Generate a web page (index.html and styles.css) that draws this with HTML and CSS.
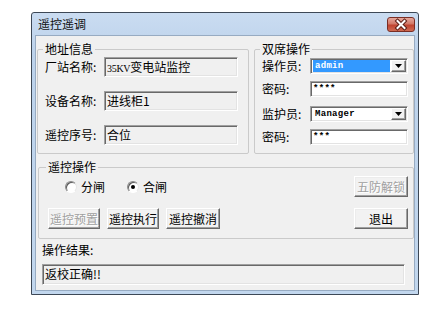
FILE: index.html
```html
<!DOCTYPE html>
<html>
<head>
<meta charset="utf-8">
<link rel="stylesheet" href="styles.css">
</head>
<body>
<div class="window">
  <div class="titlebar">
    <span class="title">遥控遥调</span>
    <div class="close">
      <svg width="26" height="13" viewBox="0 0 26 13">
        <path d="M9.5 3 L16.5 10 M16.5 3 L9.5 10" stroke="#5b1d14" stroke-width="4" stroke-linecap="square"/>
        <path d="M9.5 3 L16.5 10 M16.5 3 L9.5 10" stroke="#ffffff" stroke-width="2" stroke-linecap="square"/>
      </svg>
    </div>
  </div>
  <div class="client">
    <div class="top">
      <fieldset class="group g-addr">
        <legend>地址信息</legend>
        <div class="row"><span class="lbl">厂站名称:</span><div class="field ro sunken"><span class="tiny">35KV</span>变电站监控</div></div>
        <div class="row"><span class="lbl">设备名称:</span><div class="field ro sunken">进线柜1</div></div>
        <div class="row"><span class="lbl">遥控序号:</span><div class="field ro sunken">合位</div></div>
      </fieldset>
      <fieldset class="group g-dual">
        <legend>双席操作</legend>
        <div class="row r1"><span class="lbl">操作员:</span>
          <div class="combo sunken"><span class="sel mono hl">admin</span><span class="drop raised"><svg width="7" height="4" viewBox="0 0 7 4"><path d="M0 0 H7 L3.5 4 Z" fill="#000"/></svg></span></div>
        </div>
        <div class="row r2"><span class="lbl">密码:</span><div class="edit sunken mono">****</div></div>
        <div class="row r3"><span class="lbl">监护员:</span>
          <div class="combo sunken"><span class="sel mono">Manager</span><span class="drop raised"><svg width="7" height="4" viewBox="0 0 7 4"><path d="M0 0 H7 L3.5 4 Z" fill="#000"/></svg></span></div>
        </div>
        <div class="row r4"><span class="lbl">密码:</span><div class="edit sunken mono">***</div></div>
      </fieldset>
    </div>
    <fieldset class="group g-op">
      <legend>遥控操作</legend>
      <div class="oprow">
        <div class="radios">
          <span class="radio"><span class="circ"></span>分闸</span>
          <span class="radio"><span class="circ"><span class="dot"></span></span>合闸</span>
        </div>
        <button class="btn raised dis w54">五防解锁</button>
      </div>
      <div class="oprow row2">
        <div class="btns">
          <button class="btn raised dis">遥控预置</button>
          <button class="btn raised">遥控执行</button>
          <button class="btn raised w54">遥控撤消</button>
        </div>
        <button class="btn raised w54">退出</button>
      </div>
    </fieldset>
    <div class="result-label">操作结果:</div>
    <div class="field ro sunken result">返校正确!!</div>
  </div>
</div>
</body>
</html>
```
FILE: styles.css
```css
html, body {
  margin: 0;
  padding: 0;
  background: #ffffff;
}
body {
  font-family: "Noto Sans CJK SC", "Liberation Sans", sans-serif;
  font-size: 12px;
  color: #000;
}
.window {
  box-sizing: border-box;
  margin: 12px 0 0 31px;
  width: 388px;
  height: 283px;
  border: 1px solid #3d4856;
  border-radius: 3px 3px 0 0;
  padding: 0 3px 3px 3px;
  background: linear-gradient(#cadcf1, #bcd2eb 40px, #c2d7ee);
  display: flex;
  flex-direction: column;
}
.titlebar {
  height: 22px;
  display: flex;
  align-items: flex-start;
  justify-content: space-between;
  padding-left: 3px;
}
.title {
  line-height: 22px;
  font-size: 12px;
  color: #111;
}
.close {
  box-sizing: border-box;
  margin-top: 4px;
  width: 28px;
  height: 15px;
  border: 1px solid #7a2e25;
  border-radius: 3px;
  background: linear-gradient(#e6a89c, #d27867 45%, #c0432f 55%, #cf6a52);
  display: flex;
  align-items: center;
  justify-content: center;
}
.client {
  flex: 1;
  border: 1px solid #97abc2;
  background: #f0f0f0;
  padding: 6px 0 0 0;
}
.top {
  display: flex;
  gap: 5px;
  margin-left: 1px;
}
.group {
  margin: 0;
  min-width: 0;
  border: 1px solid #cacaca;
  border-radius: 2px;
}
.group legend {
  font-size: 12px;
  line-height: 14px;
  padding: 0 2px;
  margin-left: -2px;
}
.g-addr {
  width: 212px;
  box-sizing: border-box;
  padding: 1px 9px 8px 7px;
  display: flex;
  flex-direction: column;
  gap: 14px;
}
.g-dual {
  width: 160px;
  box-sizing: border-box;
  padding: 2px 4px 8px 7px;
}
.row {
  display: flex;
  align-items: center;
}
.g-addr .lbl { width: 59px; }
.g-dual .lbl { width: 48px; }
.lbl {
  line-height: 16px;
  white-space: nowrap;
}
.sunken {
  box-sizing: border-box;
  border: 1px solid;
  border-color: #a0a0a0 #ffffff #ffffff #a0a0a0;
  box-shadow: inset 1px 1px #696969, inset -1px -1px #e3e3e3;
}
.raised {
  box-sizing: border-box;
  border: 1px solid;
  border-color: #ffffff #696969 #696969 #ffffff;
  box-shadow: inset -1px -1px #a0a0a0, inset 1px 1px #ececec;
  background: #f2f2f2;
}
.field {
  width: 134px;
  height: 20px;
  padding: 1px 2px 0 2px;
  line-height: 16px;
  white-space: nowrap;
}
.ro { background: #f0f0f0; }
.tiny {
  font-family: "Liberation Serif", serif;
  font-size: 10px;
  letter-spacing: -0.3px;
}
.mono {
  font-family: "Liberation Mono", monospace;
  font-size: 9px;
  font-weight: bold;
  letter-spacing: 0.3px;
}
.g-dual .r2 { margin-top: 7px; }
.g-dual .r3 { margin-top: 9px; }
.g-dual .r4 { margin-top: 7px; }
.combo {
  width: 98px;
  height: 16px;
  background: #fff;
  display: flex;
  padding: 1px 1px 1px 2px;
}
.sel {
  flex: 1;
  margin-right: 1px;
  padding-left: 2px;
  line-height: 12px;
  color: #000;
}
.sel.hl {
  background: #3399ff;
  color: #ffffff;
}
.drop {
  width: 15px;
  height: 12px;
  display: flex;
  align-items: center;
  justify-content: center;
  box-shadow: inset -1px -1px #a0a0a0;
}
.edit {
  width: 98px;
  height: 16px;
  background: #fff;
  padding: 0 2px;
  line-height: 14px;
}
.g-op {
  margin: 6px 0 0 2px;
  padding: 2px 5px 9px 9px;
}
.oprow {
  display: flex;
  align-items: center;
  justify-content: space-between;
}
.row2 { margin-top: 11px; }
.radios {
  display: flex;
  align-items: center;
  gap: 22px;
  margin-left: 17px;
}
.radio {
  display: flex;
  align-items: center;
  gap: 4px;
  line-height: 14px;
}
.circ {
  box-sizing: border-box;
  width: 12px;
  height: 12px;
  border-radius: 50%;
  border: 1px solid;
  border-color: #8a8a8a #e6e6e6 #ffffff #8a8a8a;
  box-shadow: inset 1px 1px #5a5a5a;
  background: #ffffff;
  display: flex;
  align-items: center;
  justify-content: center;
}
.dot {
  width: 4px;
  height: 4px;
  border-radius: 50%;
  background: #000;
}
.btns {
  display: flex;
  gap: 7px;
}
.btn {
  width: 52px;
  height: 21px;
  padding: 0;
  font-family: "Noto Sans CJK SC", "Liberation Sans", sans-serif;
  font-size: 12px;
  line-height: 17px;
  color: #000;
  text-align: center;
}
.btn.w54 { width: 54px; }
.btn.dis {
  color: #a0a0a0;
  text-shadow: 1px 1px #ffffff;
}
.result-label {
  margin: 4px 0 0 6px;
  line-height: 14px;
}
.result {
  margin: 7px 0 0 6px;
  width: 363px;
  height: 21px;
}
```
